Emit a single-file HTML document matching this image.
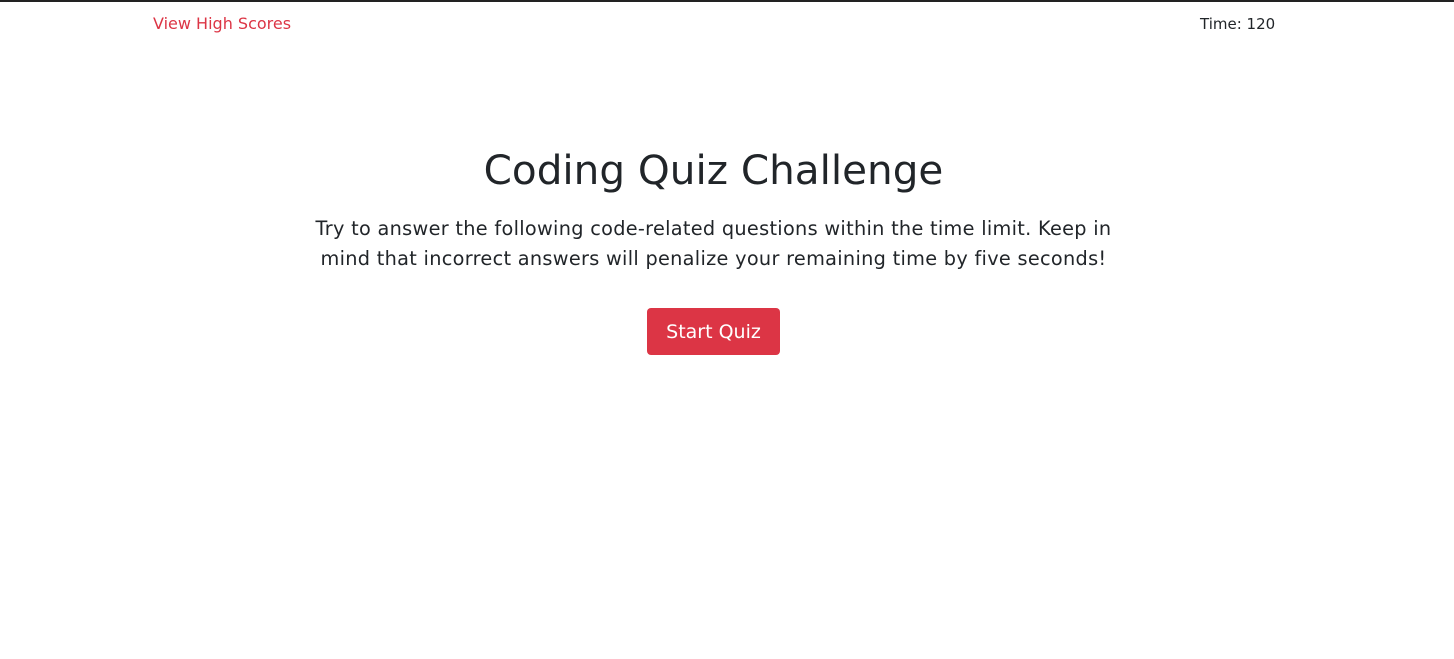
<!DOCTYPE html>
<html><head><meta charset="utf-8"><style>
html,body{margin:0;padding:0;background:#fff;width:1454px;height:659px;overflow:hidden;font-family:"DejaVu Sans","Liberation Sans",sans-serif;color:#212529}
.top{border-top:2px solid #222;height:0}
.nav{position:absolute;top:15px;font-size:15px;}
.l{left:153px;color:#dc3545;font-size:16px;top:14px}
.r{left:1200px;color:#212529}
h1{position:absolute;top:143px;left:0;width:1427px;text-align:center;margin:0;font-weight:400;font-size:40.5px;line-height:54px;}
p{position:absolute;top:214px;left:0;width:1427px;text-align:center;margin:0;font-size:19.3px;line-height:30px;letter-spacing:0.3px}
.btn{position:absolute;left:647px;top:308px;width:133px;height:47px;background:#dc3545;color:#fff;border-radius:4px;font-size:19px;line-height:48px;text-align:center}
</style></head><body>
<div class="top"></div>
<div class="nav l">View High Scores</div>
<div class="nav r">Time: 120</div>
<h1>Coding Quiz Challenge</h1>
<p>Try to answer the following code-related questions within the time limit. Keep in<br>mind that incorrect answers will penalize your remaining time by five seconds!</p>
<div class="btn">Start Quiz</div>
</body></html>
